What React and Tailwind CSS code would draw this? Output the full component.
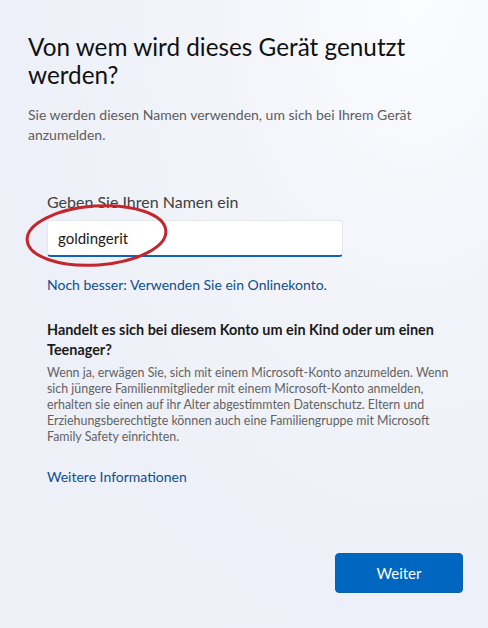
import React from "react";

const FONT = { fontFamily: 'Lato, "Noto Sans", sans-serif' };

export default function App() {
  return (
    <div
      className="relative h-[628px] w-[488px] overflow-hidden flex flex-col bg-[radial-gradient(ellipse_at_85%_0%,#fbfcfe_0%,#f2f4fa_35%,#edf0f8_70%,#eef1f7_100%)] text-[#1b1b1b]"
      style={FONT}
    >
      {/* Header */}
      <div className="pl-[28px] pr-[40px] pt-[33px]">
        <h1 className="text-[24.3px] leading-[28px] font-normal text-[#111]">
          Von wem wird dieses Gerät genutzt werden?
        </h1>
        <p className="mt-4 text-[14px] leading-[20px] text-[#5d5d5d] pr-[30px]">
          Sie werden diesen Namen verwenden, um sich bei Ihrem Gerät anzumelden.
        </p>
      </div>

      {/* Form */}
      <div className="pl-[47px] pr-[16px]">
        <label className="block mt-[47px] text-[16px] leading-[20px] text-[#404040]">
          Geben Sie Ihren Namen ein
        </label>
        <div className="relative mt-2 w-[296px]">
          <div className="h-[37px] bg-white rounded-[4px] border border-[#e6e8ec] border-b-2 border-b-[#0f62b8] flex items-center pl-[10px] text-[15px] text-[#1b1b1b]">
            goldingerit
          </div>
          {/* red marker ellipse */}
          <svg
            className="absolute left-[-47px] top-[-20px] pointer-events-none"
            width="200"
            height="80"
            viewBox="0 0 200 80"
          >
            <ellipse
              cx="96.5"
              cy="35.5"
              rx="69.5"
              ry="29.5"
              transform="rotate(-4 96.5 35.5)"
              fill="none"
              stroke="#c4272b"
              strokeWidth="3"
            />
          </svg>
        </div>

        <a className="block mt-[18px] text-[14px] leading-[20px] text-[#0c4f8f]">
          Noch besser: Verwenden Sie ein Onlinekonto.
        </a>

        <h2 className="mt-[25px] text-[14.4px] leading-[20px] font-bold text-[#1b1b1b] whitespace-nowrap">
          Handelt es sich bei diesem Konto um ein Kind oder um einen
          <br />
          Teenager?
        </h2>
        <p className="mt-[5px] text-[12.4px] leading-[16px] text-[#626262] whitespace-nowrap">
          Wenn ja, erwägen Sie, sich mit einem Microsoft-Konto anzumelden. Wenn
          <br />
          sich jüngere Familienmitglieder mit einem Microsoft-Konto anmelden,
          <br />
          erhalten sie einen auf ihr Alter abgestimmten Datenschutz. Eltern und
          <br />
          Erziehungsberechtigte können auch eine Familiengruppe mit Microsoft
          <br />
          Family Safety einrichten.
        </p>

        <a className="block mt-[22px] text-[14px] leading-[20px] text-[#0c4f8f]">
          Weitere Informationen
        </a>
      </div>

      {/* Footer */}
      <div className="mt-auto flex justify-end pr-[25px] pb-[35px]">
        <button className="w-[128px] h-[40px] rounded-[4px] bg-[#0067c0] border border-[#0a5fae] text-white text-[15px]">
          Weiter
        </button>
      </div>
    </div>
  );
}
